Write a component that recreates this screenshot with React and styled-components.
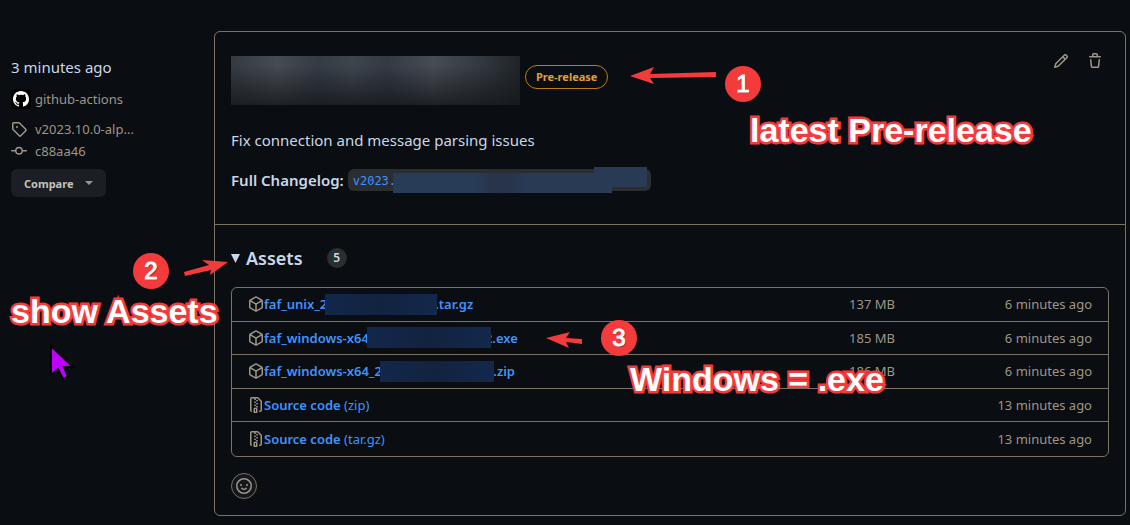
import React from "react";
import styled, { createGlobalStyle } from "styled-components";

const icons = {
  github:
    "M8 0C3.58 0 0 3.58 0 8c0 3.54 2.29 6.53 5.47 7.59.4.07.55-.17.55-.38 0-.19-.01-.82-.01-1.49-2.01.37-2.53-.49-2.69-.94-.09-.23-.48-.94-.82-1.13-.28-.15-.68-.52-.01-.53.63-.01 1.08.58 1.23.82.72 1.21 1.87.87 2.33.66.07-.52.28-.87.51-1.07-1.78-.2-3.64-.89-3.64-3.95 0-.87.31-1.59.82-2.15-.08-.2-.36-1.02.08-2.12 0 0 .67-.21 2.2.82.64-.18 1.32-.27 2-.27.68 0 1.36.09 2 .27 1.53-1.04 2.2-.82 2.2-.82.44 1.1.16 1.92.08 2.12.51.56.82 1.27.82 2.15 0 3.07-1.87 3.75-3.65 3.95.29.25.54.73.54 1.48 0 1.07-.01 1.93-.01 2.2 0 .21.15.46.55.38A8.01 8.01 0 0 0 16 8c0-4.42-3.58-8-8-8Z",
  tag: "M1 7.775V2.75C1 1.784 1.784 1 2.75 1h5.025c.464 0 .91.184 1.238.513l6.25 6.25a1.75 1.75 0 0 1 0 2.474l-5.026 5.026a1.75 1.75 0 0 1-2.474 0l-6.25-6.25A1.752 1.752 0 0 1 1 7.775Zm1.5 0c0 .066.026.13.073.177l6.25 6.25a.25.25 0 0 0 .354 0l5.025-5.025a.25.25 0 0 0 0-.354l-6.25-6.25a.25.25 0 0 0-.177-.073H2.75a.25.25 0 0 0-.25.25ZM6 5a1 1 0 1 1 0 2 1 1 0 0 1 0-2Z",
  commit:
    "M11.93 8.5a4.002 4.002 0 0 1-7.86 0H.75a.75.75 0 0 1 0-1.5h3.32a4.002 4.002 0 0 1 7.86 0h3.32a.75.75 0 0 1 0 1.5Zm-1.43-.75a2.5 2.5 0 1 0-5 0 2.5 2.5 0 0 0 5 0Z",
  pencil:
    "M11.013 1.427a1.75 1.75 0 0 1 2.474 0l1.086 1.086a1.75 1.75 0 0 1 0 2.474l-8.61 8.61c-.21.21-.47.364-.756.445l-3.251.93a.75.75 0 0 1-.927-.928l.929-3.25c.081-.286.235-.547.445-.758l8.61-8.61Zm.176 4.823L9.75 4.81l-6.286 6.287a.253.253 0 0 0-.064.108l-.558 1.953 1.953-.558a.253.253 0 0 0 .108-.064Zm1.238-3.763a.25.25 0 0 0-.354 0L10.811 3.75l1.439 1.44 1.263-1.263a.25.25 0 0 0 0-.354Z",
  trash:
    "M11 1.75V3h2.25a.75.75 0 0 1 0 1.5H2.75a.75.75 0 0 1 0-1.5H5V1.75C5 .784 5.784 0 6.75 0h2.5C10.216 0 11 .784 11 1.75ZM4.496 6.675l.66 6.6a.25.25 0 0 0 .249.225h5.19a.25.25 0 0 0 .249-.225l.66-6.6a.75.75 0 0 1 1.492.149l-.66 6.6A1.748 1.748 0 0 1 10.595 15h-5.19a1.75 1.75 0 0 1-1.741-1.575l-.66-6.6a.75.75 0 1 1 1.492-.15ZM6.5 1.75V3h3V1.75a.25.25 0 0 0-.25-.25h-2.5a.25.25 0 0 0-.25.25Z",
  package:
    "m8.878.392 5.25 3.045c.54.314.872.89.872 1.514v6.098a1.75 1.75 0 0 1-.872 1.514l-5.25 3.045a1.75 1.75 0 0 1-1.756 0l-5.25-3.045A1.75 1.75 0 0 1 1 11.049V4.951c0-.624.332-1.201.872-1.514L7.122.392a1.75 1.75 0 0 1 1.756 0ZM7.875 1.69l-4.63 2.685L8 7.133l4.755-2.758-4.63-2.685a.248.248 0 0 0-.25 0ZM2.5 5.677v5.372c0 .09.047.171.125.216l4.625 2.683V8.432Zm6.25 8.271 4.625-2.683a.25.25 0 0 0 .125-.216V5.677L8.75 8.432Z",
  zip: "M3.5 1.75v11.5c0 .09.048.173.126.217a.75.75 0 0 1-.752 1.298A1.748 1.748 0 0 1 2 13.25V1.75C2 .784 2.784 0 3.75 0h5.586c.464 0 .909.185 1.237.513l2.914 2.914c.329.328.513.773.513 1.237v8.586A1.75 1.75 0 0 1 12.25 15h-.5a.75.75 0 0 1 0-1.5h.5a.25.25 0 0 0 .25-.25V4.664a.25.25 0 0 0-.073-.177L9.513 1.573a.25.25 0 0 0-.177-.073H7.25a.75.75 0 0 1 0 1.5h-.5a.75.75 0 0 1 0-1.5h-3a.25.25 0 0 0-.25.25Zm3.75 8.75h.5c.966 0 1.75.784 1.75 1.75v3a.75.75 0 0 1-.75.75h-2.5a.75.75 0 0 1-.75-.75v-3c0-.966.784-1.75 1.75-1.75ZM6 5.25a.75.75 0 0 1 .75-.75h.5a.75.75 0 0 1 0 1.5h-.5A.75.75 0 0 1 6 5.25Zm.75 2.25h.5a.75.75 0 0 1 0 1.5h-.5a.75.75 0 0 1 0-1.5Zm1.25-.75A.75.75 0 0 1 8.75 6h.5a.75.75 0 0 1 0 1.5h-.5A.75.75 0 0 1 8 6.75ZM8.75 3h.5a.75.75 0 0 1 0 1.5h-.5a.75.75 0 0 1 0-1.5ZM8 9.75A.75.75 0 0 1 8.75 9h.5a.75.75 0 0 1 0 1.5h-.5A.75.75 0 0 1 8 9.75Zm-1 2.5v2.25h1v-2.25a.25.25 0 0 0-.25-.25h-.5a.25.25 0 0 0-.25.25Z",
  smiley:
    "M8 0a8 8 0 1 1 0 16A8 8 0 0 1 8 0ZM1.5 8a6.5 6.5 0 1 0 13 0 6.5 6.5 0 0 0-13 0Zm3.82 1.636a.75.75 0 0 1 1.038.175l.007.009c.103.118.22.222.35.31.264.178.683.37 1.285.37.602 0 1.02-.192 1.285-.371.13-.088.247-.192.35-.31l.007-.008a.75.75 0 0 1 1.222.87l-.614-.43.614.43-.001.002-.002.003-.005.007-.014.019a2.066 2.066 0 0 1-.184.213c-.16.166-.338.316-.53.445-.63.418-1.37.638-2.127.629-.946 0-1.652-.308-2.126-.63a3.331 3.331 0 0 1-.715-.657l-.014-.02-.005-.006-.002-.003a.75.75 0 0 1 .183-1.044ZM12 7a1 1 0 1 1-2 0 1 1 0 0 1 2 0ZM5 8a1 1 0 1 1 0-2 1 1 0 0 1 0 2Z",
};

const assets = [
  {
    icon: "package",
    start: "faf_unix_2",
    hidden: 112,
    tuck: 2,
    end: ".tar.gz",
    size: "137 MB",
    time: "6 minutes ago",
  },
  {
    icon: "package",
    start: "faf_windows-x64",
    hidden: 124,
    end: "2.exe",
    tuck: 6,
    size: "185 MB",
    time: "6 minutes ago",
  },
  {
    icon: "package",
    start: "faf_windows-x64_2",
    hidden: 114,
    end: "2.zip",
    tuck: 8,
    size: "186 MB",
    time: "6 minutes ago",
  },
  { icon: "zip", start: "Source code", kind: "(zip)", time: "13 minutes ago" },
  {
    icon: "zip",
    start: "Source code",
    kind: "(tar.gz)",
    time: "13 minutes ago",
  },
];

const Icon = ({ name, size = 16 }) => (
  <StIcon width={size} height={size} viewBox="0 0 16 16" aria-hidden="true">
    <path d={icons[name]} />
  </StIcon>
);

const Sidebar = () => (
  <StSidebar>
    <StTime>3 minutes ago</StTime>
    <StAuthor href="#author">
      <StAvatar>
        <Icon name="github" size={16} />
      </StAvatar>
      github-actions
    </StAuthor>
    <StMetaLink href="#tag">
      <Icon name="tag" />
      v2023.10.0-alp...
    </StMetaLink>
    <StMetaLink href="#commit">
      <Icon name="commit" />
      c88aa46
    </StMetaLink>
    <StCompare type="button">
      Compare
      <svg width="8" height="4" viewBox="0 0 8 4" aria-hidden="true">
        <path d="M0 0h8L4 4z" fill="#9e9689" />
      </svg>
    </StCompare>
  </StSidebar>
);

const AssetRow = ({ asset }) => (
  <StAssetRow>
    <Icon name={asset.icon} />
    <StAssetLink href="#asset">
      <b>{asset.start}</b>
      {asset.hidden && <StHidden $width={asset.hidden} $tuck={asset.tuck} />}
      {asset.end && <b>{asset.end}</b>}
      {asset.kind && <span> {asset.kind}</span>}
    </StAssetLink>
    <StAssetSize>{asset.size}</StAssetSize>
    <StAssetTime>{asset.time}</StAssetTime>
  </StAssetRow>
);

const Annotations = () => (
  <>
    <StDrawing $left={630} $top={66} width="88" height="20">
      <path d="M0 10 24 1 20 8 86 6V11L20 12 24 18Z" />
    </StDrawing>
    <StStep $left={725} $top={66}>
      1
    </StStep>
    <StCaption $left={750} $top={111}>
      latest Pre-release
    </StCaption>

    <StDrawing $left={182} $top={258} width="48" height="20">
      <path d="M46 4 28 17 29 12 3 18 2 14 27 7 20 2Z" />
    </StDrawing>
    <StStep $left={133} $top={253}>
      2
    </StStep>
    <StCaption $left={11} $top={292}>
      show Assets
    </StCaption>

    <StDrawing $left={546} $top={331} width="38" height="20">
      <path d="M0 7 24 1 20 7 36 8V13L20 11 23 17Z" />
    </StDrawing>
    <StStep $left={601} $top={320}>
      3
    </StStep>
    <StCaption $left={630} $top={360}>
      Windows = .exe
    </StCaption>

    <StDrawing $left={48} $top={342} width="30" height="42">
      <path
        d="M3 4V33L10 27 15 37 20 35 16 25H25Z"
        fill="#bf00ff"
        stroke="#000"
        strokeWidth="2"
      />
    </StDrawing>
  </>
);

const App = () => {
  return (
    <>
      <GlobalStyle />
      <StPage>
        <Sidebar />
        <StCard>
          <StRelease>
            <StTitleRow>
              <StHiddenTitle aria-label="Release title" />
              <StPreRelease>Pre-release</StPreRelease>
              <StActions>
                <StIconButton type="button" aria-label="Edit">
                  <Icon name="pencil" />
                </StIconButton>
                <StIconButton type="button" aria-label="Delete">
                  <Icon name="trash" />
                </StIconButton>
              </StActions>
            </StTitleRow>
            <StText>Fix connection and message parsing issues</StText>
            <StText>
              <b>Full Changelog:</b>
              <StVersion href="#changelog">v2023.</StVersion>
            </StText>
          </StRelease>
          <StAssets open>
            <StSummary>
              <svg width="9" height="9" viewBox="0 0 9 9" aria-hidden="true">
                <path d="M0 0h9L4.500 9z" fill="#c9d8e8" />
              </svg>
              <StAssetsTitle>Assets</StAssetsTitle>
              <StCount>5</StCount>
            </StSummary>
            <StAssetList>
              {assets.map((asset, index) => (
                <AssetRow key={index} asset={asset} />
              ))}
            </StAssetList>
            <StReaction type="button" aria-label="Add reaction">
              <Icon name="smiley" />
            </StReaction>
          </StAssets>
        </StCard>
        <Annotations />
      </StPage>
    </>
  );
};

const GlobalStyle = createGlobalStyle`
  * {
    box-sizing: border-box;
  }

  body {
    margin: 0;
    background: #0a0d11;
    color: #c9d8e8;
    font-family: "Noto Sans", "Open Sans", sans-serif;
    font-size: 15px;
    line-height: 24px;
  }

  a {
    color: inherit;
    text-decoration: none;
  }

  b {
    font-weight: 600;
  }

  button {
    font-family: inherit;
    cursor: pointer;
  }
`;

const StIcon = styled.svg`
  flex: none;
  fill: currentColor;
`;

const StPage = styled.main`
  position: relative;
  display: flex;
  align-items: flex-start;
  padding: 31px 4px 8px 11px;
`;

const StSidebar = styled.aside`
  flex: none;
  display: flex;
  flex-direction: column;
  align-items: flex-start;
  width: 203px;
  padding-top: 24px;
  color: #9e9689;
  font-size: 13px;
  line-height: 22px;
`;

const StTime = styled.div`
  margin-bottom: 9px;
  color: #c9d8e8;
  font-size: 15px;
  line-height: 24px;
`;

const StAuthor = styled.a`
  display: flex;
  align-items: center;
  gap: 4px;
  margin-bottom: 8px;
`;

const StAvatar = styled.span`
  display: flex;
  align-items: center;
  justify-content: center;
  width: 20px;
  height: 20px;
  border-radius: 4px;
  background: #000;
  color: #fff;
`;

const StMetaLink = styled.a`
  display: flex;
  align-items: center;
  gap: 8px;
`;

const StCompare = styled.button`
  display: flex;
  align-items: center;
  gap: 12px;
  height: 28px;
  margin-top: 7px;
  padding: 0 13px;
  border: 0;
  border-radius: 6px;
  background: #1b1e25;
  color: #c6c1b9;
  font-size: 11px;
  font-weight: 700;
`;

const StCard = styled.section`
  flex: 1;
  min-width: 0;
  border: 1px solid #7b7265;
  border-radius: 6px;
`;

const StRelease = styled.div`
  padding: 24px 16px 32px;
  border-bottom: 1px solid #7b7265;
`;

const StTitleRow = styled.div`
  display: flex;
  height: 48px;
  margin-bottom: 24px;
`;

const StHiddenTitle = styled.div`
  flex: none;
  width: 289px;
  height: 49px;
  background:
    linear-gradient(to bottom, transparent 20%, rgba(20, 22, 26, 0.8)),
    linear-gradient(
      to right,
      #343a42,
      #454b52 16%,
      #343b44 30%,
      #3d444c 42%,
      #333a43 54%,
      #464c54 70%,
      #323940 86%,
      #202427
    );
`;

const StPreRelease = styled.span`
  align-self: flex-start;
  margin: 9px 0 0 5px;
  padding: 0 10px;
  border: 1px solid #bb8009;
  border-radius: 12px;
  color: #dfa03a;
  font-size: 11px;
  font-weight: 700;
  line-height: 22px;
`;

const StActions = styled.div`
  display: flex;
  align-items: flex-start;
  gap: 6px;
  margin-left: auto;
`;

const StIconButton = styled.button`
  display: flex;
  justify-content: center;
  width: 28px;
  padding: 0;
  border: 0;
  background: none;
  color: #9e9689;
  margin-top: -3px;
`;

const StText = styled.p`
  display: flex;
  align-items: center;
  gap: 4px;
  margin: 0;

  & + & {
    margin-top: 16px;
  }
`;

const StVersion = styled.a`
  position: relative;
  width: 303px;
  height: 22px;
  padding: 0 5px;
  border-radius: 6px;
  background: #2a2e31;
  color: #3f93ff;
  font-family: "DejaVu Sans Mono", "Liberation Mono", monospace;
  font-size: 12px;
  line-height: 24px;

  &::before,
  &::after {
    content: "";
    position: absolute;
    height: 20px;
    background: #283a54;
  }

  &::before {
    top: 4px;
    left: 45px;
    width: 219px;
    background: linear-gradient(
      to right,
      #283c58 36%,
      #27344a 46%,
      #27344a 52%,
      #283a54 60%
    );
  }

  &::after {
    top: -2px;
    right: 4px;
    width: 53px;
  }
`;

const StAssets = styled.details`
  padding: 16px;
`;

const StSummary = styled.summary`
  display: flex;
  align-items: center;
  height: 32px;
  margin-bottom: 14px;
  padding-top: 2px;
  list-style: none;
  cursor: pointer;
`;

const StAssetsTitle = styled.h2`
  margin: 0 24px 0 6px;
  font-size: 18px;
  font-weight: 600;
`;

const StCount = styled.span`
  width: 20px;
  height: 20px;
  border-radius: 50%;
  background: #2a2e31;
  font-size: 12px;
  font-weight: 600;
  line-height: 20px;
  text-align: center;
`;

const StAssetList = styled.ul`
  display: grid;
  grid-auto-rows: 1fr;
  min-height: 170px;
  margin: 0 0 16px;
  padding: 0;
  border: 1px solid #7b7265;
  border-radius: 6px;
  list-style: none;
`;

const StAssetRow = styled.li`
  display: flex;
  align-items: center;
  padding: 0 16px;
  color: #9e9689;
  font-size: 13px;

  &:not(:last-child) {
    border-bottom: 1px solid #7b7265;
  }
`;

const StAssetLink = styled.a`
  display: flex;
  flex: 1;
  align-items: center;
  color: #3f93ff;
  white-space: pre;
`;

const StHidden = styled.span`
  position: relative;
  width: ${(props) => props.$width}px;
  height: 21px;
  margin-left: -2px;
  margin-right: -${(props) => props.$tuck}px;
  background: linear-gradient(to right, #12274b, #12233f 50%, #13284c);
`;

const StAssetSize = styled.span`
  text-align: right;
`;

const StAssetTime = styled.span`
  width: 197px;
  text-align: right;
`;

const StReaction = styled.button`
  display: flex;
  align-items: center;
  justify-content: center;
  width: 26px;
  height: 26px;
  padding: 0;
  border: 1px solid #7b7265;
  border-radius: 50%;
  background: #14171c;
  color: #9e9689;
`;

/* annotations drawn over the page */
const StDrawing = styled.svg`
  position: absolute;
  left: ${(props) => props.$left}px;
  top: ${(props) => props.$top}px;
  fill: #f43b3b;
`;

const StStep = styled.span`
  position: absolute;
  left: ${(props) => props.$left}px;
  top: ${(props) => props.$top}px;
  width: 36px;
  height: 36px;
  border-radius: 50%;
  background: #f43b3b;
  color: #fff;
  font-family: "Liberation Sans", Arial, sans-serif;
  font-size: 24px;
  line-height: 36px;
  text-align: center;
  text-shadow: 1px 1px 1px rgba(0, 0, 0, 0.4);
  -webkit-text-stroke: 1px #fff;
`;

const StCaption = styled.strong`
  position: absolute;
  left: ${(props) => props.$left}px;
  top: ${(props) => props.$top}px;
  color: #fff;
  font-family: "Liberation Sans", Arial, sans-serif;
  font-size: 34px;
  line-height: 38px;
  white-space: nowrap;
  paint-order: stroke fill;
  -webkit-text-stroke: 5px #f43b3b;
`;

export default App;
